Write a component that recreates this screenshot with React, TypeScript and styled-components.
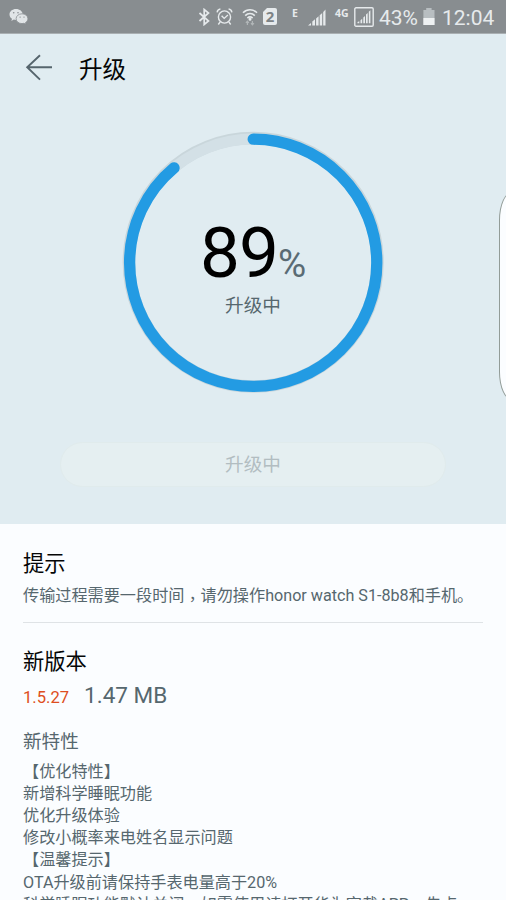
import React from "react";
import styled, { createGlobalStyle } from "styled-components";

const GlobalStyle = createGlobalStyle`
  * { box-sizing: border-box; }
  html, body { margin: 0; padding: 0; }
  body {
    background: #fbfdff;
    color: #56676e;
    font-family: Roboto, "Noto Sans CJK SC", sans-serif;
    overflow: hidden;
  }
`;

const Screen = styled.main`
  position: relative;
  width: 506px;
  height: 900px;
  overflow: hidden;
  background: #fbfdff;
`;

const StatusBar = styled.header`
  height: 34px;
  display: flex;
  align-items: center;
  justify-content: space-between;
  padding: 0 12px 0 9px;
  background: #888d90;
  border-bottom: 1px solid #a9afb2;
  color: #e6eaec;
`;

const StatusIcons = styled.div`
  display: flex;
  align-items: center;
  height: 34px;
`;

const Glyph = styled.svg<{ $gap?: number }>`
  display: block;
  flex: none;
  margin-right: ${(p) => p.$gap ?? 0}px;
`;

const NetworkLabel = styled.span<{ $width: number }>`
  width: ${(p) => p.$width}px;
  height: 19px;
  font: 700 10.5px/12px "Open Sans", sans-serif;
`;

const StatusText = styled.span<{ $width: number }>`
  width: ${(p) => p.$width}px;
  font-size: 21px;
  line-height: 34px;
  padding-top: 2px;
  white-space: nowrap;
`;

const Hero = styled.section`
  height: 490px;
  display: flex;
  flex-direction: column;
  align-items: center;
  background: #e0ecf1;
`;

const TitleBar = styled.div`
  width: 100%;
  height: 68px;
  display: flex;
  align-items: center;
  padding: 0 0 2px 25px;
`;

const Title = styled.h1`
  margin: 5px 0 0 26px;
  font-size: 23.6px;
  line-height: 34px;
  font-weight: 400;
  color: #050606;
`;

const Dial = styled.div`
  display: grid;
  width: 270px;
  height: 270px;
  margin-top: 26px;
  > * { grid-area: 1 / 1; }
`;

const DialContent = styled.div`
  display: flex;
  flex-direction: column;
  align-items: center;
  padding-top: 85px;
`;

const Percent = styled.div`
  display: flex;
  align-items: baseline;
  height: 80px;
  line-height: 80px;
`;

const PercentValue = styled.span`
  font-size: 71px;
  letter-spacing: -0.9px;
  color: #000;
`;

const PercentSign = styled.span`
  font-size: 38.5px;
  color: #5a6b74;
`;

const DialLabel = styled.div`
  font-size: 18.6px;
  line-height: 24px;
  margin-top: 1px;
`;

const UpgradeButton = styled.button`
  width: 386px;
  height: 45px;
  margin-top: 44px;
  padding: 2px 0 0;
  border: 1px solid #e0ebec;
  border-radius: 23px;
  background: #e5eff1;
  color: #b2bdc1;
  font: inherit;
  font-size: 18.6px;
  line-height: 41px;
`;

const Details = styled.section`
  padding: 24px 23px 0;
`;

const Heading = styled.h2`
  margin: 0;
  font-size: 21.3px;
  line-height: 32px;
  font-weight: 400;
  color: #050606;
`;

const Body = styled.p`
  margin: 0;
  font-size: 16.15px;
  line-height: 22.1px;
  white-space: nowrap;
`;

const Comma = styled.span`
  font-family: "Noto Sans CJK TC", sans-serif;
  line-height: 0;
  vertical-align: -4px;
`;

const Hint = styled(Body)`
  margin-top: 5px;
`;

const Divider = styled.hr`
  height: 1px;
  margin: 15px 0 23px;
  border: 0;
  background: #dfe3e6;
`;

const VersionRow = styled.div`
  display: flex;
  align-items: baseline;
  height: 32px;
  gap: 15px;
  margin-top: 1px;
  line-height: 32px;
`;

const Version = styled.span`
  font-size: 16.6px;
  color: #de4e20;
`;

const PackageSize = styled.span`
  font-size: 22.5px;
`;

const Features = styled.h3`
  margin: 18px 0 6px;
  font-size: 18.6px;
  line-height: 26px;
  font-weight: 400;
`;

const EdgeHandle = styled.div`
  position: absolute;
  left: 499px;
  top: 192px;
  width: 26px;
  height: 208px;
  border: 1px solid #929c98;
  border-radius: 13px / 28px;
  background: #fbfdff;
`;

const RADIUS = 123.6;
const LENGTH = 2 * Math.PI * RADIUS;

function ProgressRing({ value }: { value: number }) {
  return (
    <Glyph width="270" height="270" viewBox="0 0 270 270" fill="none">
      <circle cx="135.2" cy="134.3" r="124.3" stroke="#c9d6db" strokeWidth="12.5" />
      <circle cx="135.2" cy="134.6" r={RADIUS} stroke="#d3e0e6" strokeWidth="10.8" />
      <circle
        cx="135.2"
        cy="134.8"
        r={RADIUS}
        stroke="#239be3"
        strokeWidth="11.3"
        strokeLinecap="round"
        strokeDasharray={`${(LENGTH * value) / 100} ${LENGTH}`}
        transform="rotate(-90 135.2 134.8)"
      />
    </Glyph>
  );
}

function ChatIcon() {
  return (
    <Glyph width="20" height="17" viewBox="0 0 20 17">
      <path fill="#e1e5e7" d="M7 1C3.3 1 .5 3.4.5 6.5c0 1.8 1 3.3 2.5 4.3l-.6 2.1 2.4-1.3c.7.2 1.4.3 2.2.3 3.8 0 6.7-2.4 6.7-5.4S10.8 1 7 1Z" />
      <path fill="#e1e5e7" stroke="#888d90" strokeWidth=".8" d="M13 5.8c-3.3 0-5.9 2.2-5.9 4.9s2.6 4.9 5.9 4.9c.7 0 1.3-.1 1.9-.3l2 1-.4-1.7c1.4-.9 2.4-2.3 2.4-3.9 0-2.7-2.6-4.9-5.9-4.9Z" />
      <g fill="#888d90">
        <circle cx="4.7" cy="4.7" r=".8" />
        <circle cx="9" cy="4.7" r=".8" />
        <circle cx="11.1" cy="9.1" r=".7" />
        <circle cx="15" cy="9.1" r=".7" />
      </g>
    </Glyph>
  );
}

function BluetoothIcon() {
  return (
    <Glyph $gap={5} width="13" height="18" viewBox="0 0 13 18" fill="none" stroke="#e6eaec" strokeWidth="1.7">
      <path d="m1.5 5 9 8L6.2 16.5v-15L10.5 5l-9 8" />
    </Glyph>
  );
}

function AlarmIcon() {
  return (
    <Glyph $gap={9} width="17" height="18" viewBox="0 0 17 18" fill="none" stroke="#e6eaec" strokeWidth="1.4">
      <circle cx="8.5" cy="9" r="6.1" />
      <path d="M1.1 4.3C1.4 2.4 2.6 1.2 4.4 1M15.9 4.3C15.6 2.4 14.4 1.2 12.6 1M4.2 13.8 2.3 16.5M12.8 13.8l1.9 2.7M5.6 7.7l2.6 2.7 3.7-3.3" />
    </Glyph>
  );
}

function WifiIcon() {
  return (
    <Glyph $gap={5} width="16" height="18" viewBox="0 0 16 18" fill="none" stroke="#e6eaec" strokeWidth="1.6">
      <path d="M1 4.8c4-4 10-4 14 0M3.2 7.6c2.8-2.8 6.8-2.8 9.6 0M5.4 10.1c1.6-1.5 3.6-1.5 5.2 0" />
      <circle cx="8" cy="11.3" r=".7" />
      <path stroke="#b1b6b8" strokeWidth="1.2" d="M5.4 17v-3.8M3.9 14.8l1.5-1.7 1.4 1.7M10.4 13v3.8M9 15.2l1.4 1.7 1.5-1.7" />
    </Glyph>
  );
}

const Sim = styled.span`
  width: 14px;
  height: 17px;
  margin-right: 15px;
  border-radius: 2px;
  background: #e6eaec;
  clip-path: polygon(4px 0, 100% 0, 100% 100%, 0 100%, 0 4px);
  color: #7d8386;
  text-align: center;
  font: 700 15px/17px "Noto Sans", sans-serif;
`;

function SignalIcon() {
  return (
    <Glyph $gap={9} width="18" height="18" viewBox="0 0 18 18" fill="#e6eaec">
      <path d="M0 17.5 3 15v2.5ZM4.3 13.6l2.7-2.3v6.2H4.3ZM8.1 10.4l2.5-2.2v9.3H8.1ZM11.7 7.2l2.5-2.3v12.6h-2.5ZM15.2 4l2.3-2.6v16.1h-2.3Z" />
    </Glyph>
  );
}

function BoxedSignalIcon() {
  return (
    <Glyph $gap={5} width="20" height="20" viewBox="0 0 20 20" fill="#e6eaec">
      <rect x=".8" y=".8" width="18.4" height="18.4" rx="1.2" fill="none" stroke="#e6eaec" strokeWidth="1.4" />
      <path d="M3.5 16.2v-1.3l1.8-.7v2ZM6.5 13.2l1.7-1.4v4.4H6.5ZM9.3 10.5 11 9v7.2H9.3ZM12 7.6l1.7-1.6v10.2H12ZM14.8 4.8l1.6-1.5v12.9h-1.6Z" />
    </Glyph>
  );
}

function BatteryIcon() {
  return (
    <Glyph $gap={7} width="12" height="17" viewBox="0 0 12 17">
      <path fill="#b8bec1" d="M3.2 0h5.4v2h2.9v15H.4V2h2.8Z" />
      <path fill="#eef1f2" d="M.4 10h11.1v7H.4Z" />
    </Glyph>
  );
}

const features = [
  "【优化特性】",
  "新增科学睡眠功能",
  "优化升级体验",
  "修改小概率来电姓名显示问题",
  "【温馨提示】",
  "OTA升级前请保持手表电量高于20%",
  "科学睡眠功能默认关闭，如需使用请打开华为穿戴APP，先点",
];

function CommaText({ text }: { text: string }) {
  return (
    <>
      {text.split("，").map((part, i) => (
        <React.Fragment key={i}>
          {i > 0 && <Comma lang="zh-Hant">，</Comma>}
          {part}
        </React.Fragment>
      ))}
    </>
  );
}

export default function App() {
  return (
    <>
      <GlobalStyle />
      <Screen lang="zh-Hans">
        <StatusBar>
          <ChatIcon />
          <StatusIcons>
            <BluetoothIcon />
            <AlarmIcon />
            <WifiIcon />
            <Sim>2</Sim>
            <NetworkLabel $width={16}>E</NetworkLabel>
            <SignalIcon />
            <NetworkLabel $width={19}>4G</NetworkLabel>
            <BoxedSignalIcon />
            <StatusText $width={44}>43%</StatusText>
            <BatteryIcon />
            <StatusText $width={52}>12:04</StatusText>
          </StatusIcons>
        </StatusBar>
        <Hero>
          <TitleBar>
            <Glyph width="28" height="27" viewBox="0 0 28 27" fill="none" stroke="#56656d" strokeWidth="1.9">
              <path d="M15 1.2 2.2 13.3 15 25.6M2.2 13.3H27" />
            </Glyph>
            <Title>升级</Title>
          </TitleBar>
          <Dial>
            <ProgressRing value={88.9} />
            <DialContent>
              <Percent>
                <PercentValue>89</PercentValue>
                <PercentSign>%</PercentSign>
              </Percent>
              <DialLabel>升级中</DialLabel>
            </DialContent>
          </Dial>
          <UpgradeButton disabled>升级中</UpgradeButton>
        </Hero>
        <Details>
          <Heading>提示</Heading>
          <Hint>
            <CommaText text="传输过程需要一段时间，请勿操作honor watch S1-8b8和手机。" />
          </Hint>
          <Divider />
          <Heading>新版本</Heading>
          <VersionRow>
            <Version>1.5.27</Version>
            <PackageSize>1.47 MB</PackageSize>
          </VersionRow>
          <Features>新特性</Features>
          {features.map((line) => (
            <Body key={line}>
              <CommaText text={line} />
            </Body>
          ))}
        </Details>
        <EdgeHandle />
      </Screen>
    </>
  );
}
